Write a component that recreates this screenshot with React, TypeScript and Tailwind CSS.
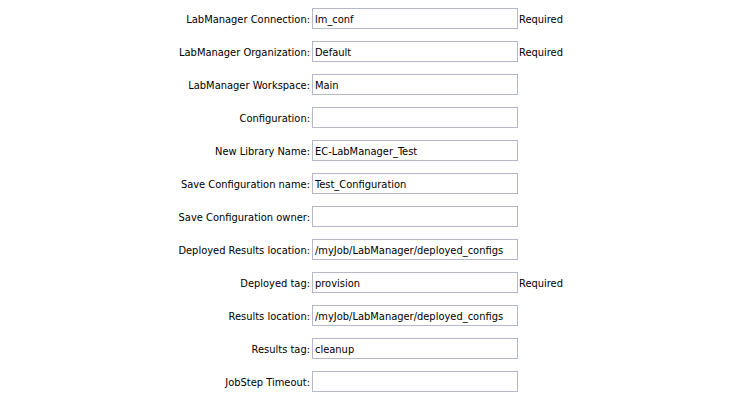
type Field = {
  id: string;
  label: string;
  value: string;
  required?: boolean;
};

const fields: Field[] = [
  { id: "connection", label: "LabManager Connection:", value: "lm_conf", required: true },
  { id: "organization", label: "LabManager Organization:", value: "Default", required: true },
  { id: "workspace", label: "LabManager Workspace:", value: "Main" },
  { id: "configuration", label: "Configuration:", value: "" },
  { id: "library", label: "New Library Name:", value: "EC-LabManager_Test" },
  { id: "save-name", label: "Save Configuration name:", value: "Test_Configuration" },
  { id: "save-owner", label: "Save Configuration owner:", value: "" },
  { id: "deployed-location", label: "Deployed Results location:", value: "/myJob/LabManager/deployed_configs" },
  { id: "deployed-tag", label: "Deployed tag:", value: "provision", required: true },
  { id: "results-location", label: "Results location:", value: "/myJob/LabManager/deployed_configs" },
  { id: "results-tag", label: "Results tag:", value: "cleanup" },
  { id: "timeout", label: "JobStep Timeout:", value: "" },
];

function FieldRow({ field }: { field: Field }) {
  return (
    <div className="flex items-center">
      <label htmlFor={field.id} className="w-[312px] shrink-0 pt-0.5 pr-0.5 text-right whitespace-nowrap">
        {field.label}
      </label>
      <input
        id={field.id}
        type="text"
        defaultValue={field.value}
        required={field.required}
        className="h-[21px] w-[206px] shrink-0 border border-[#b5b8c8] bg-white px-0.5 pt-0.5 shadow-none outline-none"
      />
      {field.required && <span className="pt-0.5 pl-px">Required</span>}
    </div>
  );
}

export default function App() {
  return (
    <form className="flex flex-col gap-3 bg-white pt-2 font-['DejaVu_Sans_Condensed','DejaVu_Sans',sans-serif] text-[11px] leading-4 text-black">
      {fields.map((field) => (
        <FieldRow key={field.id} field={field} />
      ))}
    </form>
  );
}
